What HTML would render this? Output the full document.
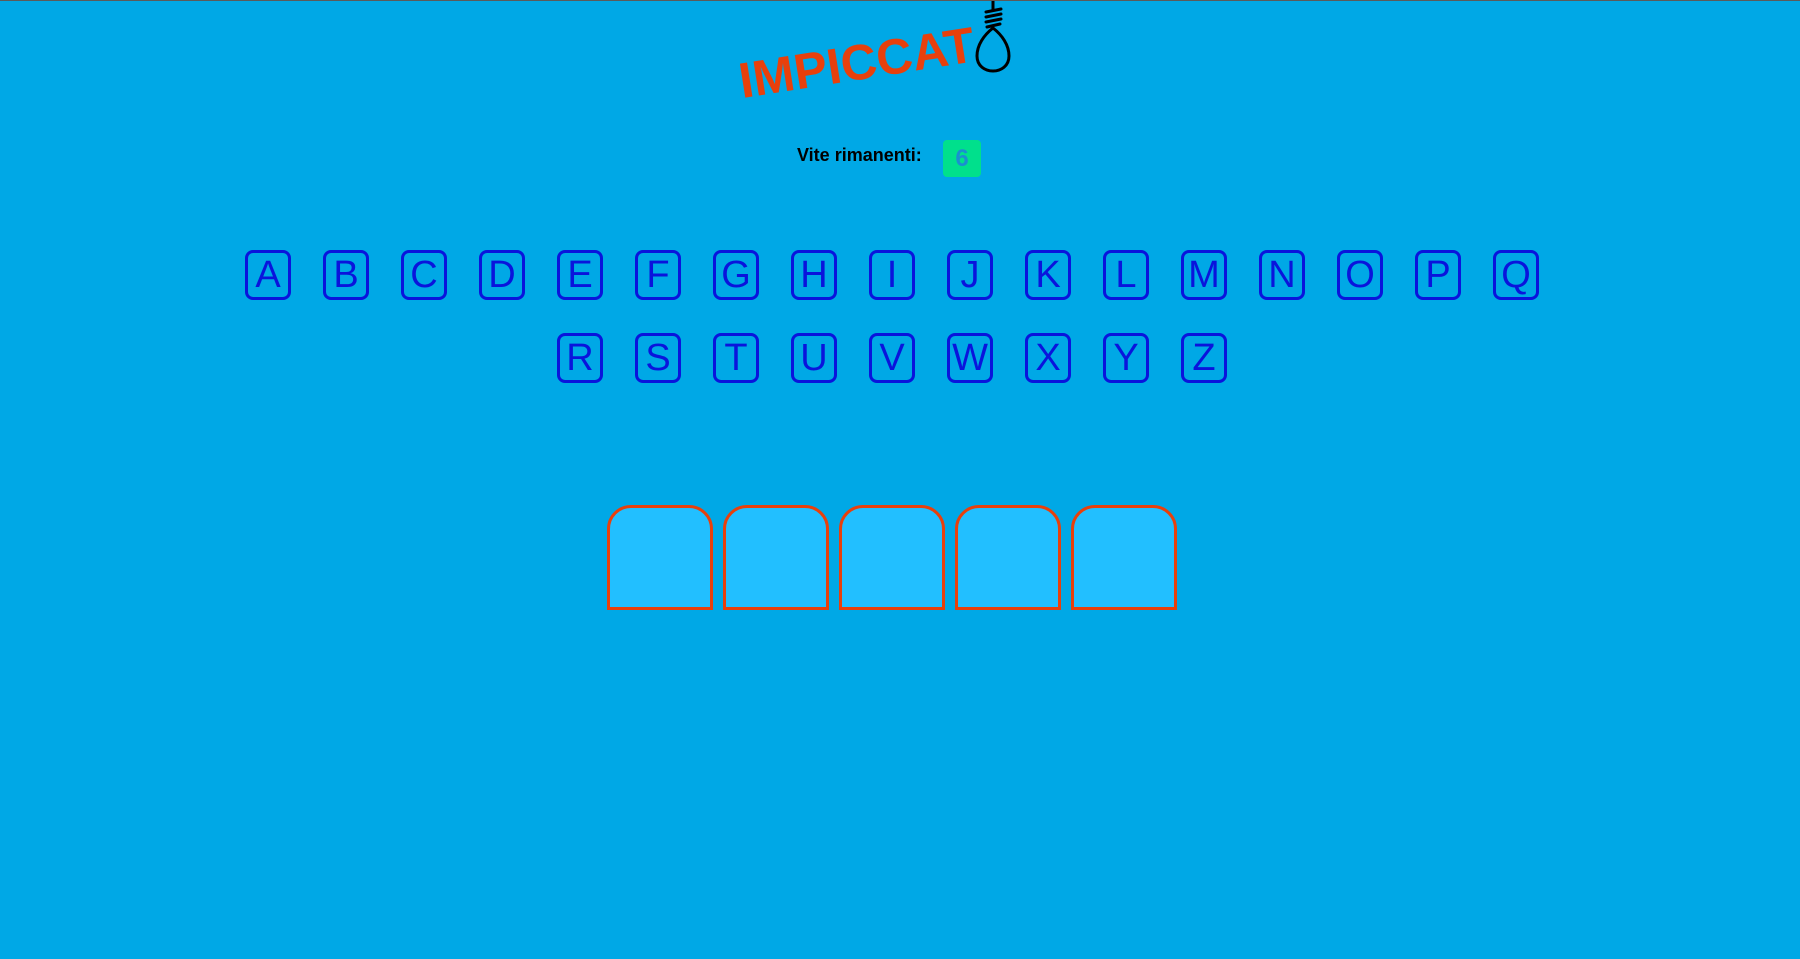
<!DOCTYPE html>
<html><head><meta charset="utf-8"><style>
html,body{margin:0;padding:0;}
body{width:1800px;height:959px;background:#00a8e6;position:relative;overflow:hidden;font-family:"Liberation Sans",sans-serif;border-top:1px solid #5a5a5a;box-sizing:border-box}
.t{position:absolute;left:744px;top:50px;font-size:50px;font-weight:bold;color:#e8400c;transform:rotate(-9deg);transform-origin:left bottom;letter-spacing:0px;line-height:60px}
.v{position:absolute;left:797px;top:144px;font-size:18px;font-weight:bold;color:#000}
.g{position:absolute;left:943px;top:139px;width:38px;height:37px;background:#00e08c;border-radius:4px;color:#1a8fd0;font-weight:bold;font-size:24px;text-align:center;line-height:37px}
.k{position:absolute;width:40px;height:44px;border:3px solid #0a14dc;border-radius:8px;color:#0a14dc;font-size:38px;text-align:center;line-height:44px}
.b{position:absolute;top:504px;width:100px;height:99px;border:3px solid #e8400c;border-radius:24px 24px 0 0;background:#22bfff}
</style></head><body>
<div class="t">IMPICCAT</div>
<svg style="position:absolute;left:970px;top:0" width="48" height="75" viewBox="0 0 48 75">
<g fill="none" stroke="#000" stroke-width="3" stroke-linecap="round">
<line x1="23" y1="0" x2="23" y2="9"/>
<line x1="16" y1="11" x2="31" y2="8"/>
<line x1="16" y1="16" x2="31" y2="13"/>
<line x1="16" y1="21" x2="31" y2="18"/>
<line x1="17" y1="26" x2="30" y2="23"/>
<path d="M23 27 C14 34 7 44 7 55 C7 65 15 70 23 70 C31 70 39 65 39 55 C39 44 32 34 23 27Z"/>
</g></svg>
<div class="v">Vite rimanenti:</div>
<div class="g">6</div>
<div class="k" style="left:245px;top:249px">A</div>
<div class="k" style="left:323px;top:249px">B</div>
<div class="k" style="left:401px;top:249px">C</div>
<div class="k" style="left:479px;top:249px">D</div>
<div class="k" style="left:557px;top:249px">E</div>
<div class="k" style="left:635px;top:249px">F</div>
<div class="k" style="left:713px;top:249px">G</div>
<div class="k" style="left:791px;top:249px">H</div>
<div class="k" style="left:869px;top:249px">I</div>
<div class="k" style="left:947px;top:249px">J</div>
<div class="k" style="left:1025px;top:249px">K</div>
<div class="k" style="left:1103px;top:249px">L</div>
<div class="k" style="left:1181px;top:249px">M</div>
<div class="k" style="left:1259px;top:249px">N</div>
<div class="k" style="left:1337px;top:249px">O</div>
<div class="k" style="left:1415px;top:249px">P</div>
<div class="k" style="left:1493px;top:249px">Q</div>
<div class="k" style="left:557px;top:332px">R</div>
<div class="k" style="left:635px;top:332px">S</div>
<div class="k" style="left:713px;top:332px">T</div>
<div class="k" style="left:791px;top:332px">U</div>
<div class="k" style="left:869px;top:332px">V</div>
<div class="k" style="left:947px;top:332px">W</div>
<div class="k" style="left:1025px;top:332px">X</div>
<div class="k" style="left:1103px;top:332px">Y</div>
<div class="k" style="left:1181px;top:332px">Z</div>
<div class="b" style="left:607px"></div>
<div class="b" style="left:723px"></div>
<div class="b" style="left:839px"></div>
<div class="b" style="left:955px"></div>
<div class="b" style="left:1071px"></div>
</body></html>
